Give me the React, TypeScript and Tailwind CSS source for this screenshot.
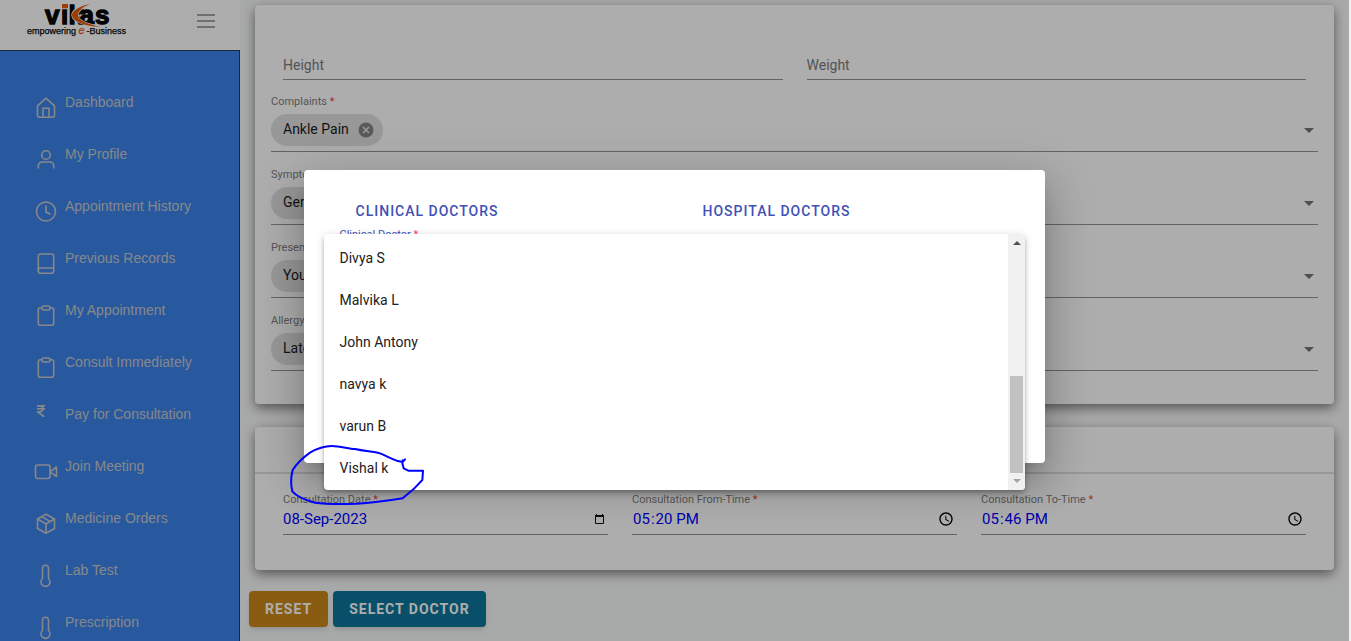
import React from "react";
import { FaIndianRupeeSign } from "react-icons/fa6";

function Icon({ children }: { children: React.ReactNode }) {
  return (
    <svg
      viewBox="0 0 24 24"
      className="mt-1 size-6 shrink-0"
      fill="none"
      stroke="currentColor"
      strokeWidth="1.6"
      strokeLinecap="round"
      strokeLinejoin="round"
      aria-hidden="true"
    >
      {children}
    </svg>
  );
}

const clipboard = (
  <Icon>
    <path d="M8 3.8H6.2A2 2 0 0 0 4.3 5.800V19.200A2 2 0 0 0 6.300 21.200H17.700A2 2 0 0 0 19.700 19.200V5.800A2 2 0 0 0 17.700 3.800H16" />
    <rect x="8" y="2" width="8" height="4" rx="1.6" />
  </Icon>
);

const thermometer = (
  <Icon>
    <path d="M8.500 14.500V4.300a3 3 0 0 1 6 0V14.500a4.500 4.500 0 1 1-6 0Z" />
  </Icon>
);

const menu = [
  {
    label: "Dashboard",
    icon: (
      <Icon>
        <path d="M3.500 9.800 12 2.200l8.500 7.600v9.400a2 2 0 0 1-2 2h-13a2 2 0 0 1-2-2Z" />
        <path d="M9 21v-8.800h6V21" />
      </Icon>
    ),
  },
  {
    label: "My Profile",
    icon: (
      <Icon>
        <circle cx="12" cy="7" r="4.300" />
        <path d="M4.300 20v-2a4 4 0 0 1 4-4h7.400a4 4 0 0 1 4 4v2" />
      </Icon>
    ),
  },
  {
    label: "Appointment History",
    icon: (
      <Icon>
        <circle cx="12" cy="11.500" r="9.500" />
        <path d="M12 6v6l4 2" />
      </Icon>
    ),
  },
  {
    label: "Previous Records",
    icon: (
      <Icon>
        <rect x="4.300" y="2" width="15.400" height="19.300" rx="2.200" />
        <path d="M4.300 18a2 2 0 0 1 2-2h13.400" />
      </Icon>
    ),
  },
  { label: "My Appointment", icon: clipboard },
  { label: "Consult Immediately", icon: clipboard },
  {
    label: "Pay for Consultation",
    icon: (
      <span className="w-6 shrink-0">
        <FaIndianRupeeSign className="size-[14px]" />
      </span>
    ),
  },
  {
    label: "Join Meeting",
    icon: (
      <Icon>
        <rect x="1.500" y="5" width="14.500" height="13.500" rx="2.200" />
        <path d="m22.500 7-6.500 4.800 6.500 4.700Z" />
      </Icon>
    ),
  },
  {
    label: "Medicine Orders",
    icon: (
      <Icon>
        <path d="M20.500 7v9.500L12 21.300l-8.500-4.800V7L12 2.200Z" />
        <path d="M3.500 7 12 12l8.500-5M12 12v9.300M7.700 4.600l8.600 5" />
      </Icon>
    ),
  },
  { label: "Lab Test", icon: thermometer },
  { label: "Prescription", icon: thermometer },
];

function Logo() {
  return (
    <svg viewBox="0 0 104 38" className="h-[38px] w-[104px]" role="img" aria-label="vikas">
      <text
        x="20 36 43.500 54.500 70"
        y="23.500"
        fontFamily="Liberation Sans, sans-serif"
        fontWeight="700"
        fontSize="26"
        fill="#080808"
        stroke="#080808"
        strokeWidth="1.300"
      >
        vikas
      </text>
      <rect x="35" y="2" width="8.500" height="6.800" fill="#fff" />
      <path d="M37 4h6v4.200h-6Z" fill="#e65a0a" />
      <path
        d="M65 4C56 6 47 10 47 15.200c0 6 14 11.300 28.500 11.600C64 24.500 53 20.500 53 15.200 53 10.500 58 7 65 4Z"
        fill="#e65a0a"
        stroke="#fff"
        strokeWidth="1.400"
        paintOrder="stroke"
      />
      <g fontFamily="Liberation Sans, sans-serif" fontSize="9" fill="#080808" stroke="#080808" strokeWidth=".25">
        <text x="2" y="34">empowering</text>
        <text x="53.500" y="34" fontStyle="italic" fontSize="11" fill="#e65a0a" stroke="#e65a0a">e</text>
        <text x="61.500" y="34">-Business</text>
      </g>
    </svg>
  );
}

function Sidebar() {
  return (
    <aside className="flex w-60 shrink-0 flex-col overflow-hidden bg-white">
      <div className="flex h-[50px] shrink-0 items-start justify-between px-[25px]">
        <Logo />
        <button type="button" aria-label="Toggle menu" className="mt-[14px] flex w-[18px] flex-col gap-1">
          <span className="h-[2px] bg-[#a2a2ae]" />
          <span className="h-[2px] bg-[#a2a2ae]" />
          <span className="h-[2px] bg-[#a2a2ae]" />
        </button>
      </div>
      <nav className="flex-1 border-t border-r border-[#2b3c52] bg-[#3c83ea] pt-[41px] font-['Liberation_Sans',sans-serif] text-sm leading-5 text-[#c6c8cc]">
        {menu.map((item) => (
          <a key={item.label} href="#" className="flex h-[52px] items-start gap-[7px] pl-[34px]">
            {item.icon}
            <span>{item.label}</span>
          </a>
        ))}
      </nav>
    </aside>
  );
}

function Required() {
  return <span className="text-[#f44336]"> *</span>;
}

function ChipField({ label, chip, required }: { label: string; chip: string; required?: boolean }) {
  return (
    <div className="border-b border-[#949494] pt-[15px] pb-[5px]">
      <div className="text-[11px] leading-4 text-[#808080]">
        {label}
        {required && <Required />}
      </div>
      <div className="mt-1 flex items-center justify-between pr-1">
        <span className="flex h-8 items-center gap-2 rounded-full bg-[#e0e0e0] pr-2 pl-3 text-sm text-[#1c1c1c]">
          <span className="pb-[2px]">{chip}</span>
          <button type="button" aria-label={`Remove ${chip}`}>
            <svg viewBox="0 0 18 18" className="size-[18px]">
              <circle cx="9" cy="9" r="7.500" fill="#858585" />
              <path d="m6 6 6 6m0-6-6 6" stroke="#e0e0e0" strokeWidth="1.600" />
            </svg>
          </button>
        </span>
        <button type="button" aria-label={`Open ${label}`}>
          <svg viewBox="0 0 10 5" className="h-[5px] w-[10px]">
            <path d="M0 0h10L5 5Z" fill="#757575" />
          </svg>
        </button>
      </div>
    </div>
  );
}

function TimeField({ id, label, value }: { id: string; label: string; value: string }) {
  return (
    <div className="border-b border-[#949494] pb-1">
      <label htmlFor={id} className="block text-[11px] leading-4 text-[#808080]">
        {label}
        <Required />
      </label>
      <input id={id} type="time" defaultValue={value} className="block h-[22px] w-full bg-transparent text-[15px] text-[#0000ff] outline-none" />
    </div>
  );
}

const cardStyle = "rounded bg-white shadow-[0_4px_12px_rgba(0,0,0,0.5)]";

const doctors = ["Divya S", "Malvika L", "John Antony", "navya k", "varun B", "Vishal k"];

function DoctorDialog() {
  return (
    <div className="absolute inset-0 flex items-start justify-center bg-black/32 pt-[170px]">
      <div
        role="dialog"
        aria-label="Select doctor"
        className="relative h-[293px] w-[55%] rounded bg-white px-6 pt-[23px] shadow-[0_11px_15px_-7px_rgba(0,0,0,0.2),0_24px_38px_3px_rgba(0,0,0,0.14),0_9px_46px_8px_rgba(0,0,0,0.12)]"
      >
        <div className="grid grid-cols-2 text-sm font-medium tracking-[1px] text-[#3f51b5]">
          <button type="button" className="h-9 px-7 text-left">CLINICAL DOCTORS</button>
          <button type="button" className="h-9 px-7 text-left">HOSPITAL DOCTORS</button>
        </div>
        <label htmlFor="doctor" className="block pl-3 text-[11px] leading-3 text-[#3f51b5]">
          Clinical Doctor<span className="text-[#ff4081]"> *</span>
        </label>
        <select id="doctor" className="ml-3 w-40 text-sm" />
        <div className="absolute inset-x-5 top-16 flex h-64 overflow-hidden rounded bg-white shadow-[0_2px_4px_-1px_rgba(0,0,0,0.2),0_4px_5px_rgba(0,0,0,0.14),0_1px_10px_rgba(0,0,0,0.12)]">
          <ul role="listbox" aria-label="Clinical Doctor" className="flex flex-1 flex-col justify-end pb-px text-sm text-[#212121]">
            {doctors.map((name) => (
              <li key={name} role="option" aria-selected={false} className="flex h-[42px] items-center px-4">
                {name}
              </li>
            ))}
          </ul>
          <div className="flex w-[17px] flex-col items-center justify-between bg-[#f1f1f1] py-[7px]" aria-hidden="true">
            <svg viewBox="0 0 8 4" className="h-1 w-2">
              <path d="M0 4h8L4 0Z" fill="#505050" />
            </svg>
            <div className="flex w-full flex-1 flex-col justify-end px-[2px] pb-[6px]">
              <div className="h-[97px] bg-[#c1c1c1]" />
            </div>
            <svg viewBox="0 0 8 4" className="h-1 w-2">
              <path d="M0 0h8L4 4Z" fill="#a3a3a3" />
            </svg>
          </div>
        </div>
      </div>
      <svg viewBox="0 0 600 360" className="absolute top-[400px] left-60 h-[120px] w-[200px]" fill="none" aria-hidden="true">
        <path
          d="M495 178 488 186 470 182C450 175 435 166 420 160 400 154 375 154 345 147 325 146 300 138 275 138 245 138 225 149 210 158 190 172 170 192 158 210 153 230 152 255 157 274 170 290 195 300 225 308 260 313 310 312 350 311 395 309 440 303 488 295L520 268 547 240 549 212H505L491 205 487 190 488 181"
          stroke="#0000ff"
          strokeWidth="6"
          strokeLinecap="round"
          strokeLinejoin="round"
        />
      </svg>
    </div>
  );
}

export default function App() {
  return (
    <div className="h-screen bg-[#f0f0f0] pr-[2px] font-[Roboto,sans-serif]">
      <div className="relative flex h-full overflow-hidden">
        <Sidebar />
        <main className="min-w-0 flex-1 bg-[#f8faf9] px-[15px] pt-[5px]">
          <section className={`px-4 pb-[33px] ${cardStyle}`}>
            <div className="-mb-px grid grid-cols-2 gap-6 px-3 pt-[49px]">
              {["Height", "Weight"].map((name) => (
                <input
                  key={name}
                  aria-label={name}
                  placeholder={name}
                  className="h-[26px] w-full border-b border-[#949494] bg-transparent pb-1 text-sm outline-none placeholder:text-[#7c7c7c]"
                />
              ))}
            </div>
            <ChipField label="Complaints" chip="Ankle Pain" required />
            <ChipField label="Symptoms" chip="General" required />
            <ChipField label="Present Illness" chip="Young" />
            <ChipField label="Allergy" chip="Latex" />
          </section>

          <section className={`mt-[23px] pb-[35px] ${cardStyle}`}>
            <div className="h-[47px] border-b-2 border-[#dddfde]" />
            <div className="grid grid-cols-3 gap-6 px-7 pt-[18px]">
              <div className="border-b border-[#949494] pb-1">
                <label htmlFor="date" className="block text-[11px] leading-4 text-[#808080]">
                  Consultation Date
                  <Required />
                </label>
                <div className="flex h-[22px] items-center pr-1">
                  <input id="date" defaultValue="08-Sep-2023" className="min-w-0 flex-1 bg-transparent text-[15px] text-[#0000ff] outline-none" />
                  <button type="button" aria-label="Open calendar">
                    <svg viewBox="0 0 9 10" className="h-[10px] w-[9px]">
                      <path d="M.5 1.500h8v8h-8Z" fill="none" stroke="#111" />
                      <path d="M0 1h9v2H0ZM1 0h1v1H1ZM7 0h1v1H7Z" fill="#111" />
                    </svg>
                  </button>
                </div>
              </div>
              <TimeField id="from" label="Consultation From-Time" value="17:20" />
              <TimeField id="to" label="Consultation To-Time" value="17:46" />
            </div>
          </section>

          <div className="mt-[21px] -ml-[6px] flex gap-[5px] text-sm font-bold tracking-[1px] text-white">
            <button type="button" className="h-9 rounded bg-[#cb881a] px-4 pb-px shadow-md">RESET</button>
            <button type="button" className="h-9 rounded bg-[#0c769d] px-4 pb-px shadow-md">SELECT DOCTOR</button>
          </div>
        </main>
        <DoctorDialog />
      </div>
    </div>
  );
}
